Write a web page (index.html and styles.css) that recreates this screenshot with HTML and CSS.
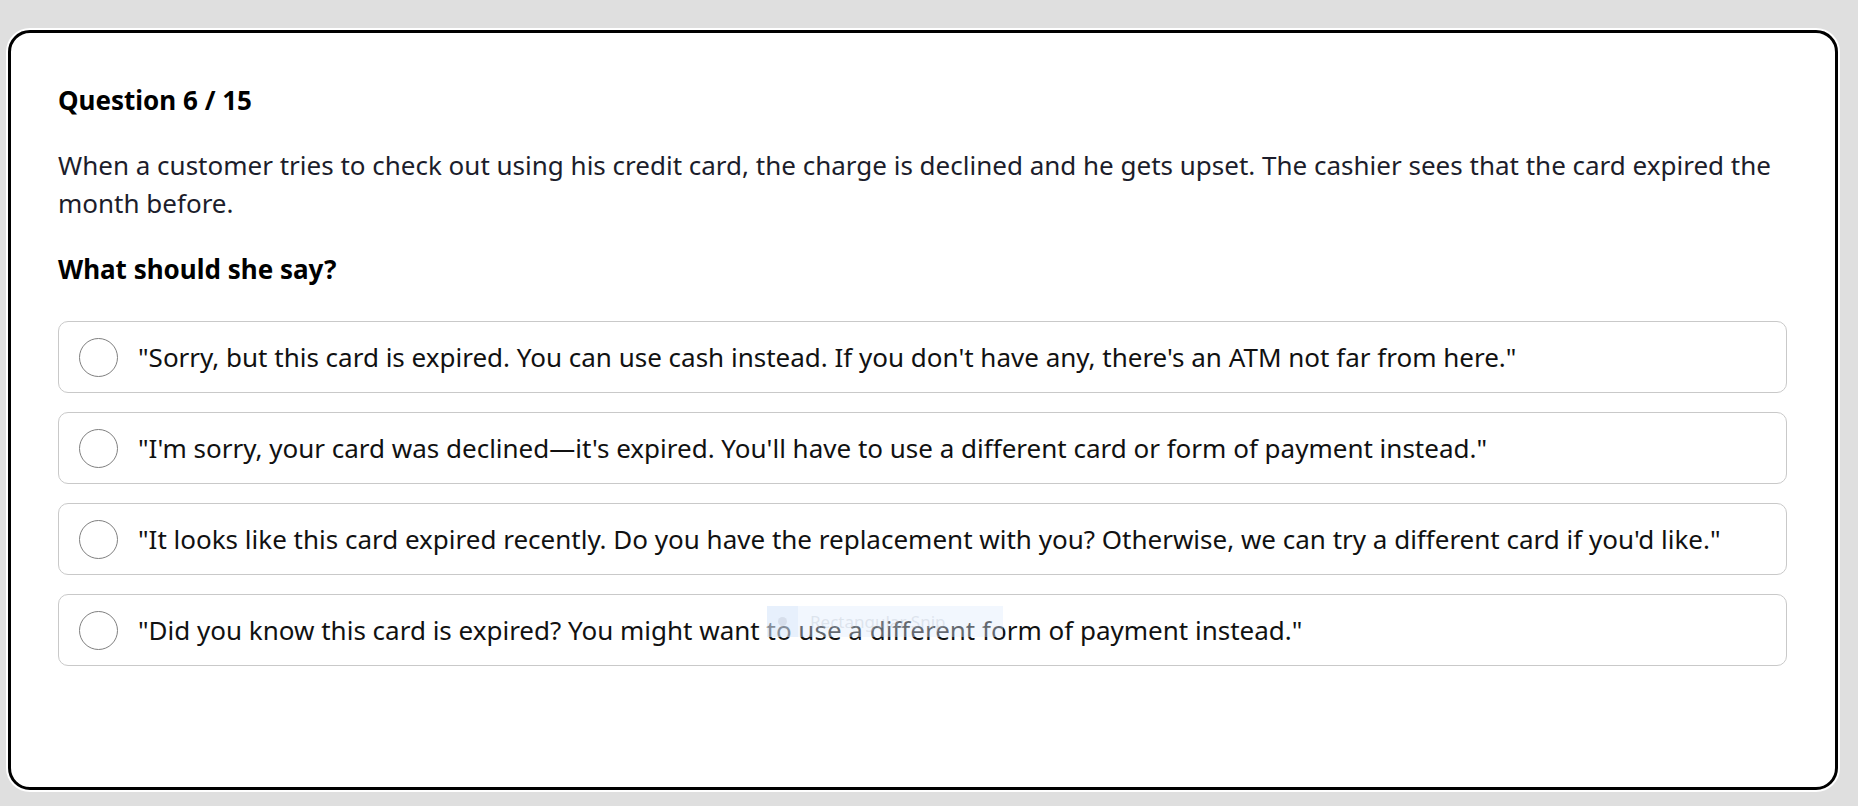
FILE: index.html
```html
<!DOCTYPE html>
<html lang="en">
<head>
    <meta charset="UTF-8">
    <meta name="viewport" content="width=device-width, initial-scale=1.0">
    <title>Question 6 / 15</title>
    <link rel="stylesheet" href="styles.css">
</head>
<body>
    <div class="page">
        <div class="card">
            <div class="question-count">Question 6 / 15</div>
            <p class="scenario">When a customer tries to check out using his credit card, the charge is declined and he gets upset. The cashier sees that the card expired the month before.</p>
            <div class="prompt">What should she say?</div>
            <div class="options">
                <label class="option">
                    <span class="radio"></span>
                    <span class="option-text">"Sorry, but this card is expired. You can use cash instead. If you don't have any, there's an ATM not far from here."</span>
                </label>
                <label class="option">
                    <span class="radio"></span>
                    <span class="option-text">"I'm sorry, your card was declined—it's expired. You'll have to use a different card or form of payment instead."</span>
                </label>
                <label class="option">
                    <span class="radio"></span>
                    <span class="option-text">"It looks like this card expired recently. Do you have the replacement with you? Otherwise, we can try a different card if you'd like."</span>
                </label>
                <label class="option">
                    <span class="radio"></span>
                    <span class="option-text">"Did you know this card is expired? You might want to use a different form of payment instead."</span>
                </label>
            </div>
        </div>
    </div>
    <div class="snip-tip">
        <span class="snip-icon"><span class="snip-dot"></span></span>
        <span class="snip-label">Rectangular Snip</span>
    </div>
</body>
</html>
```

FILE: styles.css
```css
body {
    margin: 0;
    background-color: #dfdfdf;
    font-family: "Noto Sans", "Open Sans", sans-serif;
}
.page {
    padding: 30px 20px 16px 8px;
}
.card {
    box-sizing: border-box;
    height: 760px;
    background-color: #fff;
    border: 3px solid #000;
    border-radius: 22px;
    box-shadow: 0 0 0 2px #fff;
    padding: 48px 48px 0 47px;
    font-size: 26px;
    line-height: 38px;
}
.question-count {
    font-weight: bold;
    color: #000;
    margin-bottom: 27px;
}
.scenario {
    margin: 0 0 28px 0;
    color: #1c1d2b;
}
.prompt {
    font-weight: bold;
    color: #000;
    margin-bottom: 33px;
}
.options {
    display: flex;
    flex-direction: column;
    gap: 19px;
}
.option {
    display: flex;
    align-items: center;
    gap: 20px;
    padding: 15.5px 20px;
    border: 1px solid #c9c9c9;
    border-radius: 10px;
    color: #111;
    cursor: pointer;
}
.radio {
    box-sizing: border-box;
    flex: none;
    width: 39px;
    height: 39px;
    border: 1.5px solid #808080;
    border-radius: 50%;
}
.snip-tip {
    position: absolute;
    left: 767px;
    top: 606px;
    width: 236px;
    height: 31px;
    display: flex;
    align-items: center;
    background-color: rgba(222, 236, 252, 0.4);
    pointer-events: none;
}
.snip-icon {
    width: 31px;
    height: 31px;
    display: flex;
    align-items: center;
    justify-content: center;
    background-color: rgba(205, 225, 250, 0.3);
}
.snip-dot {
    width: 9px;
    height: 9px;
    border-radius: 50%;
    background-color: rgba(200, 208, 220, 0.55);
}
.snip-label {
    margin-left: 12px;
    font-size: 17px;
    color: rgba(170, 180, 195, 0.3);
}
```
